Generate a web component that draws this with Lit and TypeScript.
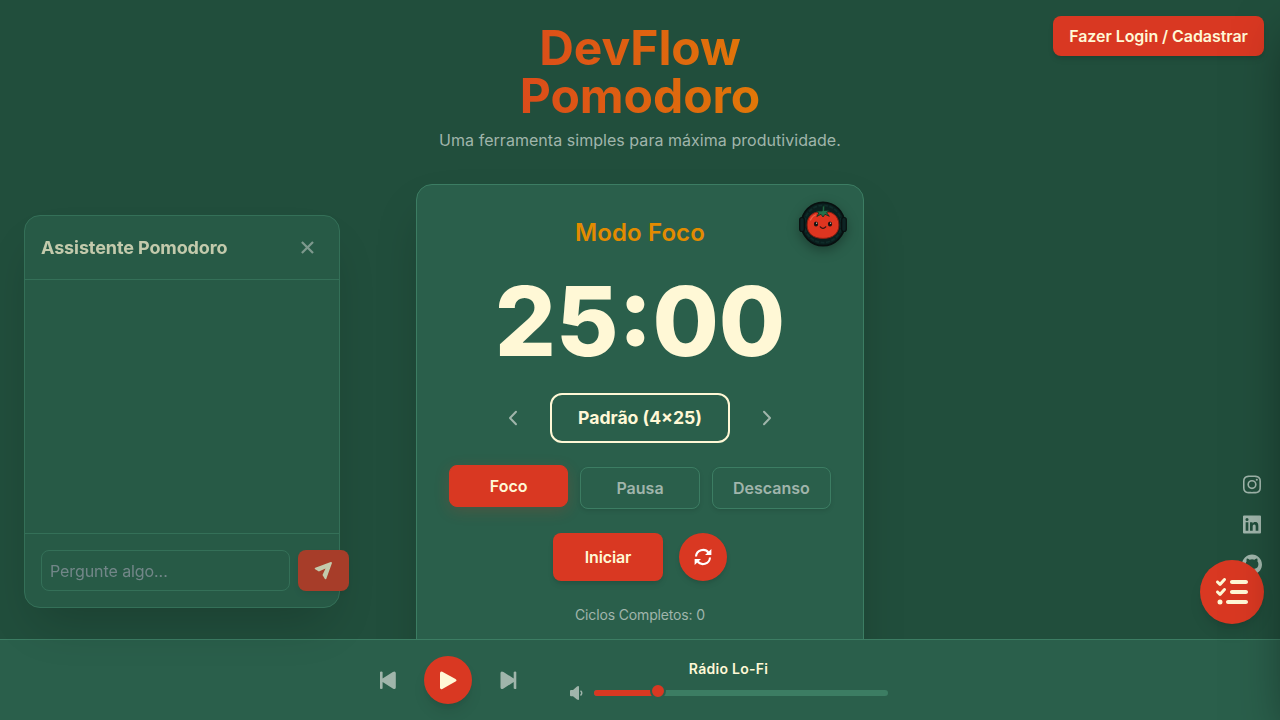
import { LitElement, html, svg, css } from "lit";
import { customElement, state } from "lit/decorators.js";

const icon = (viewBox: string, cls: string, body: unknown) =>
  html`<svg class="icon ${cls}" viewBox=${viewBox} aria-hidden="true">${body}</svg>`;

const PATHS = {
  close: "m16.192 6.344-4.243 4.242-4.242-4.242-1.414 1.414L10.535 12l-4.242 4.242 1.414 1.414 4.242-4.242 4.243 4.242 1.414-1.414L13.364 12l4.242-4.242z",
  plane: "m21.426 11.095-17-8A1 1 0 0 0 3.03 4.242l1.212 4.849L12 12l-7.758 2.909-1.212 4.849a.998.998 0 0 0 1.396 1.147l17-8a1 1 0 0 0 0-1.81z",
  tasks: "M152.1 38.2c9.9 8.9 10.7 24 1.8 33.9l-72 80c-4.4 4.9-10.6 7.8-17.2 7.9s-12.9-2.4-17.6-7L7 113C-2.3 103.6-2.3 88.4 7 79s24.6-9.4 33.9 0l22.1 22.1 55.1-61.2c8.9-9.9 24-10.7 33.9-1.8zm0 160c9.9 8.9 10.7 24 1.8 33.9l-72 80c-4.4 4.9-10.6 7.8-17.2 7.9s-12.9-2.4-17.6-7L7 273c-9.4-9.4-9.4-24.6 0-33.9s24.6-9.4 33.9 0l22.1 22.1 55.1-61.2c8.9-9.9 24-10.7 33.9-1.8zM224 96c0-17.7 14.3-32 32-32H480c17.7 0 32 14.3 32 32s-14.3 32-32 32H256c-17.7 0-32-14.3-32-32zm0 160c0-17.7 14.3-32 32-32H480c17.7 0 32 14.3 32 32s-14.3 32-32 32H256c-17.7 0-32-14.3-32-32zM160 416c0-17.7 14.3-32 32-32H480c17.7 0 32 14.3 32 32s-14.3 32-32 32H192c-17.7 0-32-14.3-32-32zM24 416a40 40 0 1 1 80 0 40 40 0 1 1-80 0z",
  instagram: "M11.999 7.377a4.623 4.623 0 1 0 0 9.248 4.623 4.623 0 0 0 0-9.248zm0 7.627a3.004 3.004 0 1 1 0-6.008 3.004 3.004 0 0 1 0 6.008zM20.533 6.111A4.605 4.605 0 0 0 17.9 3.479a6.606 6.606 0 0 0-2.186-.42c-.963-.042-1.268-.054-3.71-.054s-2.755 0-3.71.054a6.554 6.554 0 0 0-2.184.42 4.6 4.6 0 0 0-2.633 2.632 6.585 6.585 0 0 0-.419 2.186c-.043.962-.056 1.267-.056 3.71 0 2.442 0 2.753.056 3.71.015.748.156 1.486.419 2.187a4.61 4.61 0 0 0 2.634 2.632 6.584 6.584 0 0 0 2.185.45c.963.042 1.268.055 3.71.055s2.755 0 3.71-.055a6.615 6.615 0 0 0 2.186-.419 4.613 4.613 0 0 0 2.633-2.633c.263-.7.404-1.438.419-2.186.043-.962.056-1.267.056-3.71s0-2.753-.056-3.71a6.581 6.581 0 0 0-.421-2.217zm-1.218 9.532a5.043 5.043 0 0 1-.311 1.688 2.987 2.987 0 0 1-1.712 1.711 4.985 4.985 0 0 1-1.67.311c-.95.044-1.218.055-3.654.055-2.438 0-2.687 0-3.655-.055a4.96 4.96 0 0 1-1.669-.311 2.985 2.985 0 0 1-1.719-1.711 5.08 5.08 0 0 1-.311-1.669c-.043-.95-.053-1.218-.053-3.654 0-2.437 0-2.686.053-3.655a5.038 5.038 0 0 1 .311-1.687c.305-.789.93-1.41 1.719-1.712a5.01 5.01 0 0 1 1.669-.311c.951-.043 1.218-.055 3.655-.055s2.687 0 3.654.055a4.96 4.96 0 0 1 1.67.311 2.991 2.991 0 0 1 1.712 1.712 5.08 5.08 0 0 1 .311 1.669c.043.951.055 1.218.055 3.655 0 2.436 0 2.698-.043 3.654h-.011zM15.728 7.207a1.078 1.078 0 1 0 2.156 0 1.078 1.078 0 1 0-2.156 0z",
  linkedin: "M20 3H4a1 1 0 0 0-1 1v16a1 1 0 0 0 1 1h16a1 1 0 0 0 1-1V4a1 1 0 0 0-1-1zM8.339 18.337H5.667v-8.59h2.672v8.59zM7.003 8.574a1.548 1.548 0 1 1 0-3.096 1.548 1.548 0 0 1 0 3.096zm11.335 9.763h-2.669V14.16c0-.996-.018-2.277-1.388-2.277-1.39 0-1.601 1.086-1.601 2.207v4.248h-2.667v-8.59h2.56v1.174h.037c.355-.675 1.227-1.387 2.524-1.387 2.704 0 3.203 1.778 3.203 4.092v4.71z",
  github: "M12.026 2c-5.509 0-9.974 4.465-9.974 9.974 0 4.406 2.857 8.145 6.821 9.465.499.09.679-.217.679-.481 0-.237-.008-.865-.011-1.696-2.775.602-3.361-1.338-3.361-1.338-.452-1.152-1.107-1.459-1.107-1.459-.905-.619.069-.605.069-.605 1.002.07 1.527 1.028 1.527 1.028.89 1.524 2.336 1.084 2.902.829.091-.645.351-1.085.635-1.334-2.214-.251-4.542-1.107-4.542-4.93 0-1.087.389-1.979 1.024-2.675-.101-.253-.446-1.268.099-2.64 0 0 .837-.269 2.742 1.021a9.582 9.582 0 0 1 2.496-.336 9.554 9.554 0 0 1 2.496.336c1.906-1.291 2.742-1.021 2.742-1.021.545 1.372.203 2.387.099 2.64.64.696 1.024 1.587 1.024 2.675 0 3.833-2.33 4.675-4.552 4.922.355.308.675.916.675 1.846 0 1.334-.012 2.41-.012 2.737 0 .267.178.577.687.479C19.146 20.115 22 16.379 22 11.974 22 6.465 17.535 2 12.026 2z",
};

const path = (d: string) => svg`<path fill="currentColor" d=${d}/>`;

const refreshArrow = (turn: number) => svg`<g transform="rotate(${turn} 9 9)">
  <path d="M2 8.500A7 7 0 0 1 14.600 4.800" fill="none" stroke="currentColor" stroke-width="2.100"/>
  <path d="M17.400 1V7.100H11Z" fill="currentColor"/>
</g>`;

const mascot = html`<svg class="mascot" viewBox="0 0 48 48" aria-label="Mascote">
  <circle cx="24" cy="24" r="21.600" fill="#0a1f1e" stroke="#080f0f" stroke-width="1.800"/>
  <circle cx="24" cy="24" r="18.600" fill="none" stroke="#0f2c29" stroke-width="1.800" stroke-dasharray="4 1.500"/>
  <rect x="0.700" y="17.500" width="4.600" height="14" rx="2.200" fill="#0d2424" stroke="#080f0f" stroke-width="1.200"/>
  <rect x="42.700" y="17.500" width="4.600" height="14" rx="2.200" fill="#0d2424" stroke="#080f0f" stroke-width="1.200"/>
  <path d="M24 12.500C33 10 39.900 16 39.900 25C39.900 33.800 33.500 38.400 24 38.400C14.500 38.400 8.100 33.800 8.100 25C8.100 16 15 10 24 12.500Z" fill="#de3520" stroke="#8a1e12" stroke-width="1"/>
  <path d="M11.500 20Q13.300 16 16.500 15" stroke="#ee6247" stroke-width="1.300" fill="none" stroke-linecap="round"/>
  <path d="M23.200 11L24 5.800L25.700 6.200L25.200 10.500L30 10.300L27.700 12.800L30.300 16.300L26 14.300L24 17L22 14.300L17.800 16.500L19.800 13L17.300 11L22 11Z" fill="#23704a" stroke="#0e2b1e" stroke-width=".8" stroke-linejoin="round"/>
  <ellipse cx="17" cy="24" rx="2.100" ry="2.600" fill="#161313"/>
  <ellipse cx="31" cy="24" rx="2.100" ry="2.600" fill="#161313"/>
  <circle cx="17.600" cy="23.200" r=".6" fill="#f3d9cf"/><circle cx="31.600" cy="23.200" r=".6" fill="#f3d9cf"/>
  <path d="M21.300 26.800Q24 29.800 26.700 26.800" stroke="#2a1210" stroke-width="1.200" fill="none" stroke-linecap="round"/>
</svg>`;

@customElement("app-root")
export class AppRoot extends LitElement {
  @state() private mode = "Foco";
  @state() private volume = 20;
  private modes = ["Foco", "Pausa", "Descanso"];

  static styles = css`
    :host {
      --bg: #214e3c;
      --surface: #2a5f4b;
      --line: #3c7d63;
      --red: #d93822;
      --cream: #fff8d6;
      --muted: #a0b5ab;
      --amber: #e38b00;
      display: block;
      position: relative;
      width: 100%;
      height: 100vh;
      overflow: hidden;
      background: var(--bg);
      color: var(--cream);
      font-family: Inter, sans-serif;
      font-size: 16px;
      line-height: 24px;
    }
    * { box-sizing: border-box; }
    button, input { font: inherit; color: inherit; letter-spacing: inherit; margin: 0; }
    button { border: 0; background: none; padding: 0; display: flex; align-items: center; justify-content: center; }
    .icon { display: block; flex: none; }
    .page { width: 448px; margin: 0 auto; padding-top: 24px; }
    header { text-align: center; margin-bottom: 32px; }
    h1 {
      margin: 0 0 8px;
      font-size: 48px;
      line-height: 48px;
      font-weight: 700;
      letter-spacing: -.05px;
      background: linear-gradient(to right, var(--red), var(--amber));
      -webkit-background-clip: text;
      background-clip: text;
      color: transparent;
    }
    .tagline { margin: 0; color: var(--muted); letter-spacing: .04px; }
    .card {
      position: relative;
      height: 560px;
      padding: 32px;
      background: var(--surface);
      border: 1px solid var(--line);
      border-radius: 16px;
      box-shadow: 0 25px 50px -12px rgba(0, 0, 0, .25);
      display: flex;
      flex-direction: column;
      align-items: center;
    }
    .mascot { position: absolute; top: 15px; right: 16px; width: 48px; height: 48px; filter: drop-shadow(0 4px 6px rgba(0, 0, 0, .3)); }
    h2 { margin: 0 0 24px; font-size: 24px; line-height: 32px; font-weight: 600; color: var(--amber); letter-spacing: .1px; }
    .time { font-size: 96px; line-height: 96px; font-weight: 775; margin-bottom: 24px; }
    .presets { display: flex; align-items: center; gap: 24px; margin-bottom: 24px; }
    .presets .arrow { width: 26px; height: 32px; color: var(--muted); }
    .chev { width: 10px; height: 16px; }
    .preset { width: 180px; height: 50px; border: 2px solid var(--cream); border-radius: 12px; font-size: 17.600px; font-weight: 700; }
    .modes { display: grid; grid-template-columns: repeat(3, 1fr); gap: 12px; width: 100%; margin-bottom: 24px; }
    .mode { height: 42px; border: 1px solid var(--line); border-radius: 8px; font-weight: 600; color: var(--muted); box-shadow: 0 2px 4px rgba(0, 0, 0, .1); }
    .mode.on { background: var(--red); border-color: var(--red); color: var(--cream); transform: translateY(-2px); box-shadow: 0 4px 15px rgba(217, 56, 34, .2); }
    .actions { display: flex; gap: 16px; margin-bottom: 24px; }
    .start { width: 110px; height: 48px; border-radius: 8px; background: var(--red); font-weight: 600; letter-spacing: -.15px; box-shadow: 0 4px 6px -1px rgba(0, 0, 0, .1), 0 2px 4px -2px rgba(0, 0, 0, .1); }
    .reset { width: 48px; height: 48px; border-radius: 50%; background: var(--red); color: #fff; box-shadow: 0 4px 6px -1px rgba(0, 0, 0, .1), 0 2px 4px -2px rgba(0, 0, 0, .1); }
    .reset .icon { width: 18px; height: 18px; }
    .cycles { margin: 0; font-size: 14px; line-height: 20px; color: var(--muted); letter-spacing: -.15px; }

    .login { position: absolute; top: 16px; right: 16px; width: 211px; height: 40px; border-radius: 8px; background: var(--red); font-weight: 600; letter-spacing: -.06px; box-shadow: 0 4px 6px -1px rgba(0, 0, 0, .1), 0 2px 4px -2px rgba(0, 0, 0, .1); }

    .chat {
      position: absolute; left: 24px; top: 215px; width: 316px; height: 393px;
      display: flex; flex-direction: column;
      background: var(--surface); border: 1px solid var(--line); border-radius: 16px;
      box-shadow: 0 25px 50px -12px rgba(0, 0, 0, .25);
      opacity: .73;
      z-index: 4;
    }
    .chat-head { display: flex; align-items: center; justify-content: space-between; height: 64px; padding: 0 16px; border-bottom: 1px solid var(--line); }
    .chat-title { font-size: 18px; font-weight: 700; letter-spacing: -.1px; }
    .chat-close { width: 32px; height: 32px; color: var(--muted); }
    .chat-close .icon { width: 27px; height: 27px; }
    .chat-log { flex: 1; }
    .chat-form { display: flex; gap: 8px; height: 74px; padding: 16px; border-top: 1px solid var(--line); }
    .chat-form input { flex: none; width: 248.500px; height: 41px; padding: 0 8px; background: transparent; border: 1px solid var(--line); border-radius: 8px; outline: 0; letter-spacing: -.08px; }
    .chat-form input::placeholder { color: #9ca3af; opacity: .9; }
    .send { flex: none; width: 51px; height: 41px; padding: 0 0 4px 4px; background: var(--red); border-radius: 8px; box-shadow: 0 4px 6px -1px rgba(0, 0, 0, .1); }
    .send .icon { width: 21px; height: 21px; transform: rotate(-45deg); }

    .social { position: absolute; right: 16px; top: 472px; display: flex; flex-direction: column; gap: 16px; color: var(--muted); }
    .social .icon { width: 24px; height: 24px; transform: translateY(.5px); }
    .tasks { position: absolute; right: 16px; top: 560px; width: 64px; height: 64px; border-radius: 50%; background: var(--red); box-shadow: 0 10px 15px -3px rgba(0, 0, 0, .1), 0 4px 6px -4px rgba(0, 0, 0, .1); z-index: 3; }
    .tasks .icon { width: 32px; height: 32px; }

    .player {
      position: absolute; left: 0; right: 0; bottom: 0; height: 81px; z-index: 2;
      display: flex; align-items: center; justify-content: center; gap: 48px;
      background: var(--surface); border-top: 1px solid var(--line);
      padding-right: 16px;
    }
    .controls { display: flex; align-items: center; gap: 24px; }
    .skip { width: 24px; height: 24px; color: var(--muted); }
    .skip .icon { width: 24px; height: 24px; }
    .play { width: 48px; height: 48px; border-radius: 50%; background: var(--red); box-shadow: 0 10px 15px -3px rgba(0, 0, 0, .1), 0 4px 6px -4px rgba(0, 0, 0, .1); }
    .play .icon { width: 24px; height: 24px; }
    .station { width: 320px; }
    .station-name { font-size: 14px; line-height: 20px; font-weight: 600; text-align: center; letter-spacing: .26px; text-indent: 1px; }
    .volume { display: flex; align-items: center; gap: 10px; height: 16px; margin-top: 6px; }
    .volume .icon { width: 16px; height: 16px; color: var(--muted); }
    .track { position: relative; flex: 1; height: 6px; border-radius: 3px; background: var(--line); }
    .fill { height: 6px; border-radius: 3px; background: var(--red); }
    .thumb { position: absolute; top: -7px; width: 16px; height: 16px; margin-left: -3px; border-radius: 50%; border: 2px solid var(--surface); background: var(--red); }
    .drawer { position: absolute; top: 0; bottom: 0; left: 100%; width: 384px; box-shadow: 0 25px 50px -12px rgba(0, 0, 0, .5); z-index: 5; }
  `;

  render() {
    return html`
      <main class="page">
        <header>
          <h1>DevFlow<br />Pomodoro</h1>
          <p class="tagline">Uma ferramenta simples para máxima produtividade.</p>
        </header>
        <section class="card">
          ${mascot}
          <h2>Modo Foco</h2>
          <div class="time">25:00</div>
          <div class="presets">
            <button class="arrow">${icon("0 0 10 16", "chev", svg`<path d="M8 1.700 2 8l6 6.300" fill="none" stroke="currentColor" stroke-width="2" stroke-linecap="round" stroke-linejoin="round"/>`)}</button>
            <button class="preset">Padrão (4x25)</button>
            <button class="arrow">${icon("0 0 10 16", "chev", svg`<path d="M2 1.700 8 8l-6 6.300" fill="none" stroke="currentColor" stroke-width="2" stroke-linecap="round" stroke-linejoin="round"/>`)}</button>
          </div>
          <div class="modes">
            ${this.modes.map((m) => html`<button class="mode ${m === this.mode ? "on" : ""}" @click=${() => (this.mode = m)}>${m}</button>`)}
          </div>
          <div class="actions">
            <button class="start">Iniciar</button>
            <button class="reset">${icon("0 0 18 18", "", [refreshArrow(0), refreshArrow(180)])}</button>
          </div>
          <p class="cycles">Ciclos Completos: 0</p>
        </section>
      </main>

      <button class="login">Fazer Login / Cadastrar</button>

      <aside class="chat">
        <div class="chat-head">
          <span class="chat-title">Assistente Pomodoro</span>
          <button class="chat-close">${icon("0 0 24 24", "", path(PATHS.close))}</button>
        </div>
        <div class="chat-log"></div>
        <div class="chat-form">
          <input placeholder="Pergunte algo..." />
          <button class="send">${icon("0 0 24 24", "", path(PATHS.plane))}</button>
        </div>
      </aside>

      <nav class="social">
        ${[PATHS.instagram, PATHS.linkedin, PATHS.github].map((d) => icon("0 0 24 24", "", path(d)))}
      </nav>
      <button class="tasks">${icon("0 0 512 512", "", path(PATHS.tasks))}</button>

      <footer class="player">
        <div class="controls">
          <button class="skip">${icon("0 0 24 24", "", svg`<path fill="currentColor" d="M4 4.300Q4 3.500 5.200 3.500T6.600 4.300V10.500L16.800 4Q19.500 2.600 19.800 5V19.500Q19.500 21.900 16.800 20.500L6.600 14V20.200Q6.600 21 5.200 21T4 20.200Z"/>`)}</button>
          <button class="play">${icon("0 0 24 24", "", svg`<path fill="currentColor" d="M4 5.300Q4.100 3 6.300 3.800L19.500 11Q21.500 12.250 19.500 13.500L6.300 21Q4.100 21.800 4 19.500Z"/>`)}</button>
          <button class="skip">${icon("0 0 24 24", "", svg`<path fill="currentColor" d="M20.300 4.300Q20.300 3.500 19.100 3.500T17.700 4.300V10.500L7.500 4Q4.800 2.600 4.500 5V19.500Q4.800 21.900 7.500 20.500L17.700 14V20.200Q17.700 21 19.100 21T20.300 20.200Z"/>`)}</button>
        </div>
        <div class="station">
          <div class="station-name">Rádio Lo-Fi</div>
          <div class="volume">
            ${icon("0 0 16 16", "", svg`<path fill="currentColor" d="M3 5H5L9 1.500Q11 .3 11 2.200V14Q11 15.700 9 14.500L5 11.200H3Q2 11.200 2 10.200V6Q2 5 3 5Z"/><path d="M12.500 5.800Q15 8 12.500 10.500" fill="none" stroke="currentColor" stroke-width="1.500"/>`)}
            <div class="track">
              <div class="fill" style="width:${this.volume}%"></div>
              <div class="thumb" style="left:${this.volume}%"></div>
            </div>
          </div>
        </div>
      </footer>
      <div class="drawer"></div>
    `;
  }
}
